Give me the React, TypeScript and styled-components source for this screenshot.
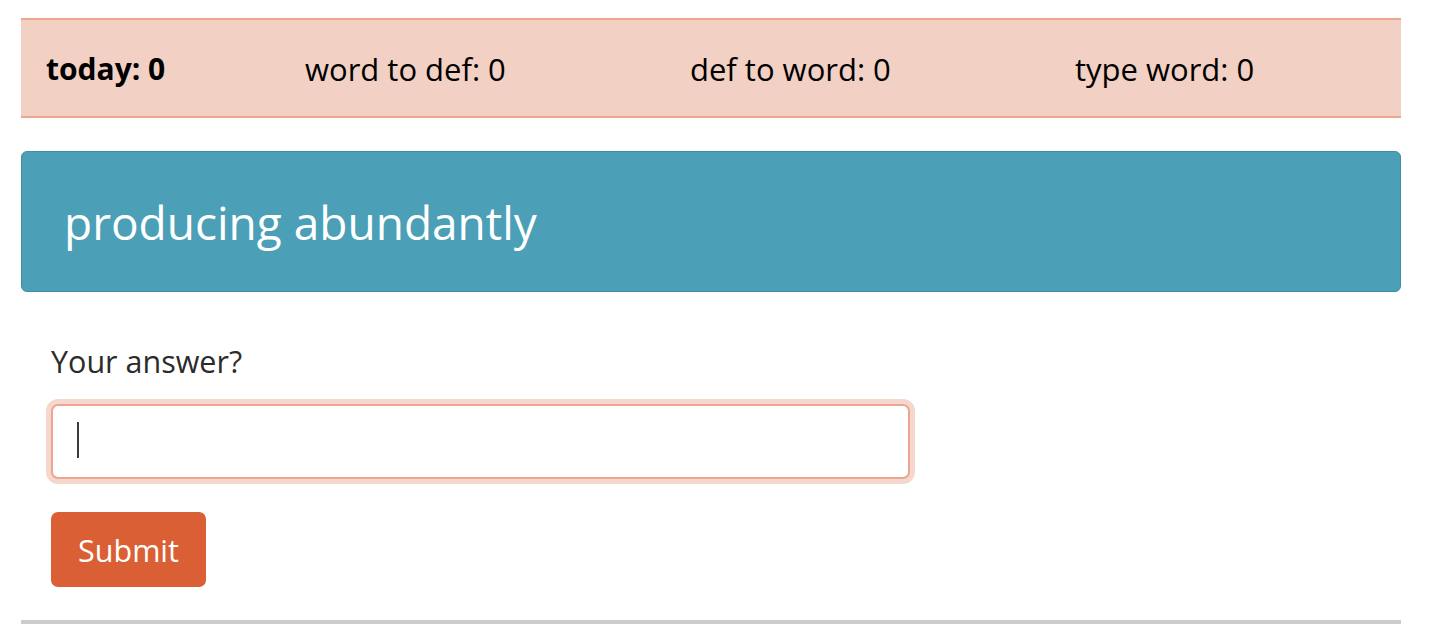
import React from "react";
import styled, { createGlobalStyle } from "styled-components";

const Global = createGlobalStyle`
  html, body { margin: 0; padding: 0; background: #ffffff; }
  body { font-family: "Open Sans", "Noto Sans", sans-serif; color: #212529; }
  * { box-sizing: border-box; }
`;

const Page = styled.div`
  width: 1380px;
  margin: 18px 0 0 21px;
  display: flex;
  flex-direction: column;
`;

const StatsBar = styled.div`
  display: grid;
  grid-template-columns: 259px 385px 385px 1fr;
  align-items: center;
  height: 100px;
  padding: 0 25px;
  background: #f2d0c3;
  border-top: 2px solid #eda58f;
  border-bottom: 2px solid #eda58f;
`;

const Stat = styled.div<{ $bold?: boolean }>`
  font-size: ${(p) => (p.$bold ? "30px" : "31px")};
  font-weight: ${(p) => (p.$bold ? 700 : 400)};
  color: #000;
  line-height: 40px;
  padding-top: 2px;
`;

const Prompt = styled.div`
  margin-top: 33px;
  height: 141px;
  display: flex;
  align-items: center;
  padding: 0 42px;
  background: #4ba0b7;
  border: 1px solid #3f8ea5;
  border-radius: 6px;
  color: #ffffff;
  font-size: 46px;
`;

const Form = styled.form`
  display: flex;
  flex-direction: column;
  align-items: flex-start;
  padding: 49px 30px 0;
`;

const Label = styled.label`
  font-size: 30.5px;
  color: #2b2b2b;
  line-height: 40px;
`;

const Field = styled.div`
  position: relative;
  margin-top: 23px;
`;

const Input = styled.input`
  display: block;
  width: 859px;
  height: 75px;
  padding: 0 24px;
  font: inherit;
  font-size: 30px;
  color: #333;
  background: #fff;
  border: 2px solid #eda58f;
  border-radius: 7px;
  outline: none;
  box-shadow: 0 0 0 5px #f5d8cd;
  caret-color: transparent;
`;

const Caret = styled.span`
  position: absolute;
  left: 26px;
  top: 18px;
  width: 2px;
  height: 36px;
  background: #3a3a3a;
  pointer-events: none;
`;

const Button = styled.button`
  margin-top: 33px;
  width: 155px;
  height: 75px;
  background: #da5f35;
  border: none;
  border-radius: 7px;
  color: #fff;
  font-family: inherit;
  font-size: 30.5px;
  padding: 0;
`;

const Rule = styled.div`
  margin-top: 33px;
  height: 4px;
  background: #cccccc;
`;

export default function App() {
  return (
    <>
      <Global />
      <Page>
        <StatsBar>
          <Stat $bold>today: 0</Stat>
          <Stat>word to def: 0</Stat>
          <Stat>def to word: 0</Stat>
          <Stat>type word: 0</Stat>
        </StatsBar>
        <Prompt>producing abundantly</Prompt>
        <Form onSubmit={(e) => e.preventDefault()}>
          <Label htmlFor="answer">Your answer?</Label>
          <Field>
            <Input id="answer" />
            <Caret />
          </Field>
          <Button type="submit">Submit</Button>
        </Form>
        <Rule />
      </Page>
    </>
  );
}
